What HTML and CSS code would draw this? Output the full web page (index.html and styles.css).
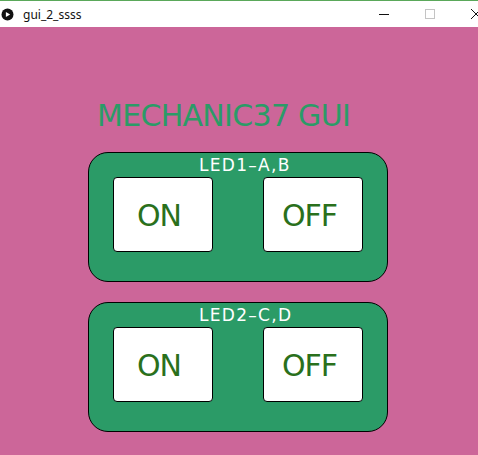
FILE: index.html
```html
<!DOCTYPE html>
<html>
<head>
<meta charset="utf-8">
<link rel="stylesheet" href="styles.css">
</head>
<body>
<div class="window">
  <div class="titlebar">
    <svg class="app-icon" width="13" height="13" viewBox="0 0 13 13"><circle cx="6.5" cy="6.5" r="6" fill="#111"/><path d="M4.9 3.9 L9.2 6.5 L4.9 9.1 Z" fill="#fff"/></svg>
    <span class="win-title">gui_2_ssss</span>
    <div class="controls">
      <div class="ctrl"><svg width="12" height="12" viewBox="0 0 12 12"><path d="M1 6.5 H11" stroke="#111" stroke-width="1"/></svg></div>
      <div class="ctrl"><svg width="12" height="12" viewBox="0 0 12 12"><rect x="1.5" y="1.5" width="9" height="9" fill="none" stroke="#c4c4c4" stroke-width="1"/></svg></div>
      <div class="ctrl"><svg width="12" height="12" viewBox="0 0 12 12"><path d="M1 1 L11 11 M11 1 L1 11" stroke="#111" stroke-width="1"/></svg></div>
    </div>
  </div>
  <div class="canvas">
    <h1 class="heading">MECHANIC37 GUI</h1>
    <section class="panel">
      <div class="panel-label">LED1–A,B</div>
      <div class="buttons">
        <div class="switch switch-on">ON</div>
        <div class="switch switch-off">OFF</div>
      </div>
    </section>
    <section class="panel">
      <div class="panel-label">LED2–C,D</div>
      <div class="buttons">
        <div class="switch switch-on">ON</div>
        <div class="switch switch-off">OFF</div>
      </div>
    </section>
  </div>
</div>
</body>
</html>
```
FILE: styles.css
```css
html, body {
  margin: 0;
  padding: 0;
  background: #cc6699;
}
.window {
  width: 478px;
  height: 455px;
  overflow: hidden;
  display: flex;
  flex-direction: column;
}
.titlebar {
  height: 26px;
  border-top: 1px solid #5aa85a;
  background: #ffffff;
  display: flex;
  align-items: center;
  flex-shrink: 0;
}
.app-icon {
  margin-left: 1px;
  flex-shrink: 0;
}
.win-title {
  margin-left: 9px;
  font-family: "Noto Sans", "DejaVu Sans", sans-serif;
  font-size: 12px;
  color: #111;
}
.controls {
  margin-left: auto;
  margin-right: -21px;
  display: flex;
  flex-shrink: 0;
}
.ctrl {
  width: 46px;
  height: 26px;
  display: flex;
  align-items: center;
  justify-content: center;
}
.canvas {
  flex: 1;
  background: #cc6699;
  padding: 74px 0 0 88px;
  display: flex;
  flex-direction: column;
  gap: 20px;
}
.heading {
  margin: 0 0 0 9px;
  font-family: "DejaVu Sans", sans-serif;
  font-weight: normal;
  font-size: 30px;
  line-height: 30px;
  letter-spacing: -0.7px;
  color: #2b9b67;
  height: 30px;
  margin-bottom: 1px;
}
.panel {
  box-sizing: border-box;
  width: 300px;
  height: 130px;
  border: 1px solid #000;
  border-radius: 20px;
  background: #2b9b67;
  padding: 4px 0 0 24px;
}
.panel-label {
  padding-left: 86px;
  font-family: "DejaVu Sans", sans-serif;
  font-size: 17px;
  line-height: 17px;
  letter-spacing: 1.3px;
  color: #ffffff;
}
.buttons {
  margin-top: 3px;
  display: flex;
  gap: 50px;
}
.switch {
  box-sizing: border-box;
  width: 100px;
  height: 75px;
  border: 1px solid #000;
  border-radius: 4px;
  background: #ffffff;
  font-family: "DejaVu Sans", sans-serif;
  font-size: 30px;
  line-height: 30px;
  letter-spacing: -1px;
  color: #2a701c;
  padding-top: 23px;
}
.switch-on {
  padding-left: 23px;
}
.switch-off {
  padding-left: 18px;
}
```
